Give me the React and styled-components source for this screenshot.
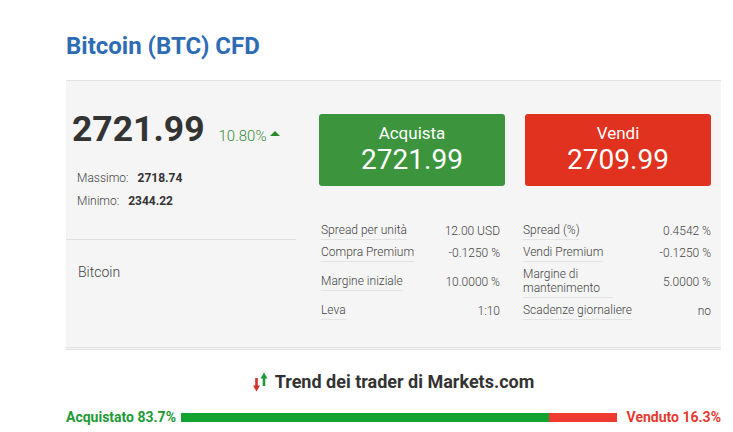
import React from "react";
import styled, { createGlobalStyle } from "styled-components";

const GlobalStyle = createGlobalStyle`
  body {
    margin: 0;
    background: #fff;
    font-family: Roboto, "Liberation Sans", Arial, sans-serif;
    color: #333;
  }
`;

const Page = styled.div`
  width: 655px;
  margin-left: 66px;
`;

const Title = styled.h1`
  margin: 0;
  padding-top: 32px;
  height: 80px;
  box-sizing: border-box;
  font-size: 24px;
  line-height: 28px;
  font-weight: 700;
  color: #2d6cb5;
`;

const Panel = styled.div`
  display: flex;
  height: 266px;
  background: #f5f5f5;
  border-top: 1px solid #e3e3e3;
  border-bottom: 3px double #e2e2e2;
`;

const LeftCol = styled.div`
  width: 230px;
  display: flex;
  flex-direction: column;
`;

const PriceBlock = styled.div`
  height: 159px;
  padding: 28px 0 0 6px;
  box-sizing: border-box;
  border-bottom: 1px solid #e0e0e0;
`;

const PriceRow = styled.div`
  display: flex;
  align-items: baseline;
`;

const BigPrice = styled.div`
  font-size: 35.5px;
  line-height: 41px;
  font-weight: 700;
  color: #333;
`;

const Change = styled.div`
  margin-left: 14px;
  font-size: 15px;
  font-weight: 300;
  color: #3a8a3a;
  display: flex;
  align-items: center;
  gap: 4px;
`;

const Triangle = styled.span`
  display: inline-block;
  width: 0;
  height: 0;
  border-left: 5px solid transparent;
  border-right: 5px solid transparent;
  border-bottom: 5px solid #2b8a2b;
  position: relative;
  top: -3px;
`;

const Stats = styled.div`
  margin-top: 20px;
  padding-left: 5px;
  display: flex;
  flex-direction: column;
  gap: 6px;
`;

const Stat = styled.div`
  font-size: 12px;
  line-height: 17px;
  font-weight: 300;
  color: #444;

  b {
    font-weight: 700;
    color: #333;
    margin-left: 6px;
  }
`;

const Asset = styled.div`
  padding: 24px 12px;
  font-size: 14px;
  font-weight: 300;
  color: #444;
`;

const RightCol = styled.div`
  flex: 1;
  padding: 33px 10px 0 23px;
`;

const Buttons = styled.div`
  display: grid;
  grid-template-columns: 1fr 1fr;
  gap: 20px;
`;

const TradeButton = styled.div`
  height: 72px;
  border-radius: 3px;
  background: ${(p) => (p.$sell ? "#e0321f" : "#3c953c")};
  color: #fff;
  display: flex;
  flex-direction: column;
  align-items: center;
  justify-content: center;
`;

const ButtonLabel = styled.div`
  font-size: 17px;
  line-height: 20px;
`;

const ButtonPrice = styled.div`
  font-size: 28px;
  line-height: 34px;
`;

const Table = styled.div`
  margin: 34px 0 0 2px;
  display: grid;
  grid-template-columns: 179px 188px;
  column-gap: 23px;
`;

const Cell = styled.div`
  display: flex;
  justify-content: space-between;
  align-items: center;
  height: ${(p) => (p.$tall ? 36 : 22)}px;
  font-size: 12px;
  font-weight: 300;
  color: #444;
`;

const Label = styled.span`
  line-height: 14px;
  padding-bottom: 2px;
  border-bottom: 1px solid #e4e4e4;
  max-width: ${(p) => (p.$narrow ? "90px" : "none")};
`;

const Value = styled.span`
  text-align: right;
`;

const Trend = styled.div`
  display: flex;
  flex-direction: column;
  align-items: center;
  padding-top: 21px;
`;

const TrendTitle = styled.div`
  display: flex;
  align-items: center;
  gap: 7px;
  font-size: 18px;
  line-height: 22px;
  font-weight: 700;
  color: #333;
`;

const BarRow = styled.div`
  margin-top: 16px;
  width: 100%;
  display: flex;
  align-items: center;
  gap: 5px;
  font-size: 14px;
  font-weight: 700;
`;

const BarLabel = styled.span`
  color: ${(p) => p.$color};
  white-space: nowrap;
`;

const Bar = styled.div`
  flex: 1;
  height: 9px;
  display: flex;
  margin: 0 5px 0 0;
`;

const Segment = styled.div`
  background: ${(p) => p.$color};
  height: 100%;
`;

const TrendIcon = () => (
  <svg width="15" height="20" viewBox="0 0 15 20">
    <path d="M3.5 6 V16" stroke="#d5302a" strokeWidth="2.6" />
    <path d="M0 13.5 L3.5 19.5 L7 13.5 Z" fill="#d5302a" />
    <path d="M11 4 V14" stroke="#1f9a35" strokeWidth="2.6" />
    <path d="M7.5 6.5 L11 0.5 L14.5 6.5 Z" fill="#1f9a35" />
  </svg>
);

const specs = [
  ["Spread per unità", "12.00 USD", "Spread (%)", "0.4542 %"],
  ["Compra Premium", "-0.1250 %", "Vendi Premium", "-0.1250 %"],
  ["Margine iniziale", "10.0000 %", "Margine di mantenimento", "5.0000 %", true],
  ["Leva", "1:10", "Scadenze giornaliere", "no"],
];

export default function App() {
  const buy = 84.4;
  return (
    <Page>
      <GlobalStyle />
      <Title>Bitcoin (BTC) CFD</Title>
      <Panel>
        <LeftCol>
          <PriceBlock>
            <PriceRow>
              <BigPrice>2721.99</BigPrice>
              <Change>
                10.80% <Triangle />
              </Change>
            </PriceRow>
            <Stats>
              <Stat>
                Massimo: <b>2718.74</b>
              </Stat>
              <Stat>
                Minimo: <b>2344.22</b>
              </Stat>
            </Stats>
          </PriceBlock>
          <Asset>Bitcoin</Asset>
        </LeftCol>
        <RightCol>
          <Buttons>
            <TradeButton>
              <ButtonLabel>Acquista</ButtonLabel>
              <ButtonPrice>2721.99</ButtonPrice>
            </TradeButton>
            <TradeButton $sell>
              <ButtonLabel>Vendi</ButtonLabel>
              <ButtonPrice>2709.99</ButtonPrice>
            </TradeButton>
          </Buttons>
          <Table>
            {specs.map(([l1, v1, l2, v2, tall]) => (
              <React.Fragment key={l1}>
                <Cell $tall={tall}>
                  <Label>{l1}</Label>
                  <Value>{v1}</Value>
                </Cell>
                <Cell $tall={tall}>
                  <Label $narrow={tall}>{l2}</Label>
                  <Value>{v2}</Value>
                </Cell>
              </React.Fragment>
            ))}
          </Table>
        </RightCol>
      </Panel>
      <Trend>
        <TrendTitle>
          <TrendIcon />
          Trend dei trader di Markets.com
        </TrendTitle>
        <BarRow>
          <BarLabel $color="#1e9a35">Acquistato 83.7%</BarLabel>
          <Bar>
            <Segment $color="#12a232" style={{ width: `${buy}%` }} />
            <Segment $color="#ef3a32" style={{ width: `${100 - buy}%` }} />
          </Bar>
          <BarLabel $color="#e53a33">Venduto 16.3%</BarLabel>
        </BarRow>
      </Trend>
    </Page>
  );
}
